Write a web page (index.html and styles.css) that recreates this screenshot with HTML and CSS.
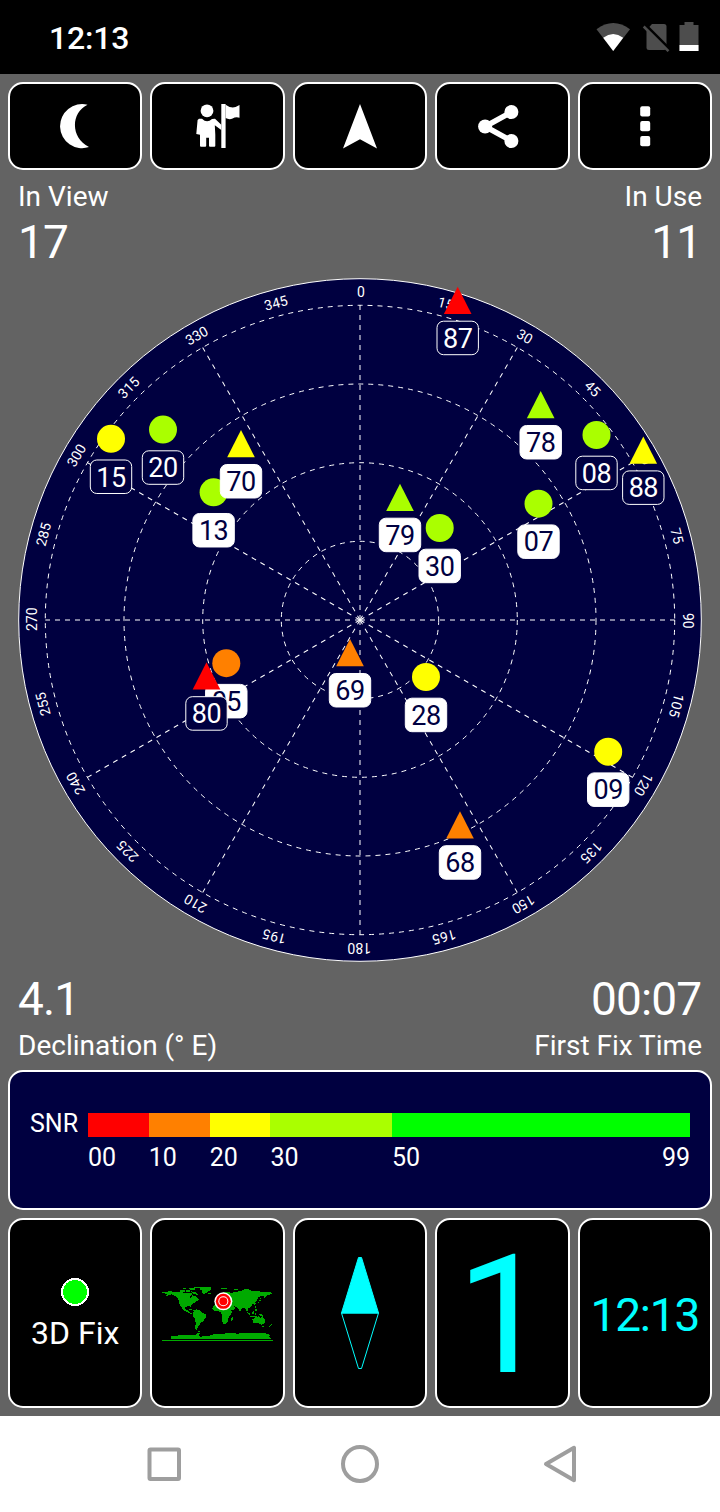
FILE: index.html
```html
<!DOCTYPE html>
<html lang="en">
<head>
    <meta charset="UTF-8">
    <title>GPS Status</title>
    <link rel="stylesheet" href="styles.css">
</head>
<body>
    <div class="status-bar">
        <span class="clock">12:13</span>
        <svg class="status-icons" width="104" height="32" viewBox="0 0 104 32">
            <!-- wifi -->
            <path class="dim" d="M17.2 31 L0.5 9.3 Q17.2 -3.2 34 9.3 Z"/>
            <path class="lit" d="M17.2 31 L7.2 17.7 Q17.2 10.3 27.2 17.7 Z"/>
            <!-- no sim -->
            <path class="dim" d="M56 4 H68 Q70.5 4 70.5 6.500 V27.500 Q70.500 30 68 30 H53 Q50.500 30 50.500 27.500 V10 Z"/>
            <path class="slash-gap" d="M48 3.500 L74 29.500"/>
            <path class="slash" d="M47.700 6.500 L72.500 31.200"/>
            <!-- battery -->
            <path class="dim" d="M88.500 2 H97.500 V5 H102.500 V31 H83.500 V5 H88.500 Z"/>
            <path class="lit" d="M83.500 25 H102.500 V31 H83.500 Z"/>
        </svg>
    </div>

    <div class="toolbar">
        <button class="tile">
            <svg width="48" height="48" viewBox="-0.7 0 48 48"><path d="M35.800 2.800 A22 22 0 1 0 37.300 45 C18.800 36 18.800 11 35.800 2.800 Z"/></svg>
        </button>
        <button class="tile">
            <svg width="48" height="48" viewBox="0.4 0 48 48">
                <circle cx="13.400" cy="8.800" r="6.400"/>
                <path d="M5.400 16.700 H8.400 Q11 19.300 13.500 19.300 Q16 19.300 18.400 17 L21.400 16.700 L27.700 22.700 V28 L21.200 23.300 L21.700 32.700 V43.700 Q21.700 44.700 20.700 44.700 H16.400 Q15.400 44.700 15.400 43.700 V35.700 H12.600 V43.700 Q12.600 44.700 11.600 44.700 H7.400 Q6.400 44.700 6.400 43.700 V32.700 L2.700 32 L4 18 Z"/>
                <path d="M27.700 2 H32 V46 H27.700 Z"/>
                <path d="M32 2.700 Q37 6.500 42 5 L45.900 3 V15.700 Q42 14.700 39 16.500 Q35.500 18 32 16 Z"/>
            </svg>
        </button>
        <button class="tile">
            <svg width="48" height="48" viewBox="0 0 48 48"><path d="M24 2 L41 46.500 L24 37.200 L7 46.500 Z"/></svg>
        </button>
        <button class="tile">
            <svg width="48" height="48" viewBox="-0.5 0 48 48">
                <circle cx="6.600" cy="24.500" r="7"/>
                <circle cx="32.900" cy="10" r="7"/>
                <circle cx="32.900" cy="39" r="7"/>
                <path class="link" d="M32.900 10 L6.600 24.500 L32.900 39"/>
            </svg>
        </button>
        <button class="tile">
            <svg width="48" height="48" viewBox="0 0 48 48">
                <rect x="19.200" y="4.300" width="10" height="10.200" rx="2"/>
                <rect x="19.200" y="19" width="10" height="10.200" rx="2"/>
                <rect x="19.200" y="34" width="10" height="10.200" rx="2"/>
            </svg>
        </button>
    </div>

    <div class="info info-top">
        <div>
            <div class="label">In View</div>
            <div class="value">17</div>
        </div>
        <div class="right">
            <div class="label">In Use</div>
            <div class="value">11</div>
        </div>
    </div>

    <svg class="sky" id="sky" width="720" height="702" viewBox="-360 -351 720 702">
        <circle class="horizon" r="341.300"/>
    </svg>

    <div class="info info-bottom">
        <div>
            <div class="value">4.1</div>
            <div class="label">Declination (° E)</div>
        </div>
        <div class="right">
            <div class="value">00:07</div>
            <div class="label">First Fix Time</div>
        </div>
    </div>

    <div class="snr">
        <div class="snr-name">SNR</div>
        <div class="scale">
            <div class="step w10 red"></div>
            <div class="step w10 orange"></div>
            <div class="step w10 yellow"></div>
            <div class="step w20 lime"></div>
            <div class="step w49 green"></div>
        </div>
        <div class="numbers">
            <div class="step w10">00</div>
            <div class="step w10">10</div>
            <div class="step w10">20</div>
            <div class="step w20">30</div>
            <div class="step w49 ends"><span>50</span><span>99</span></div>
        </div>
    </div>

    <div class="pages">
        <div class="tile fix">
            <svg width="28" height="28" viewBox="0 0 28 28" shape-rendering="crispEdges"><circle class="fix-dot" cx="14" cy="14" r="13"/></svg>
            <span>3D Fix</span>
        </div>
        <div class="tile">
            <svg class="world" width="111" height="55" viewBox="21 18 333 165">
                <g class="land" shape-rendering="crispEdges">
                    <path d="M21 37 H35 L40 33 L48 34 L60 37 L78 36 L90 40 L104 38 L113 42 L104 50 L108 55 L112 46 L122 48 L128 54 L133 59 L124 64 L114 71 L107 76 L109 84 L103 79 L92 80 L90 87 L96 91 L100 88 L101 95 L108 99 L112 103 L100 98 L86 92 L80 82 L73 72 L70 58 L62 48 L50 43 L42 46 L32 49 L37 42 L21 39 Z"/>
                    <path d="M75 30 H90 V35 H75 Z M94 30 H104 V36 H94 Z M101 24 H120 V29 H106 Z M108 34 L124 37 L128 44 L118 43 Z M120 21 H138 V25 H116 Z M84 25 H92 V28 H84 Z"/>
                    <path d="M132 27 L140 22 L152 20 L169 22 L168 30 L158 36 L148 42 L143 39 L140 31 Z M158 38 H169 V42 H160 Z"/>
                    <path d="M102 87 H112 V90 H104 Z M114 90 H118 V92 H114 Z M117 91 L124 88 L134 91 L140 98 L155 104 L151 114 L146 122 L138 128 L132 136 L128 142 L126 150 L120 146 L122 130 L121 118 L114 108 L115 98 Z M128 154 H135 V157 H128 Z"/>
                    <path d="M175 78 L182 71 L200 70 L215 74 L222 82 L227 91 L233 93 L227 104 L221 112 L218 124 L213 131 L204 132 L200 118 L201 106 L198 96 L190 94 L178 94 L172 86 Z M228 116 L234 110 L232 122 L228 125 Z"/>
                    <path d="M180 68 L180 60 L188 52 L196 44 L205 37 L218 36 L232 39 L240 35 L258 34 L270 27 L285 29 L290 34 L310 34 L330 36 L354 38 L350 42 L336 46 L328 53 L325 47 L316 48 L308 54 L306 62 L298 67 L304 73 L298 74 L290 70 L291 78 L284 84 L277 86 L281 93 L274 92 L270 85 L264 83 L258 90 L256 96 L250 86 L244 80 L236 79 L242 84 L234 91 L226 91 L218 78 L212 74 L204 68 L190 68 Z"/>
                    <path d="M198 24 H215 V27 H198 Z M236 28 H250 V31 H240 Z M312 60 H318 V64 H312 Z M308 66 H313 V70 H308 Z M316 53 H319 V58 H316 Z M301 79 H304 V83 H301 Z M300 88 H306 V94 H300 Z"/>
                    <path d="M276 95 L284 100 L286 106 L279 101 Z M289 98 L296 93 L298 101 L291 104 Z M300 98 H304 V106 H300 Z M286 107 H305 V110 H286 Z M308 100 L322 103 L327 109 L316 108 Z"/>
                    <path d="M292 118 L302 111 L312 109 L318 114 L322 107 L330 121 L328 131 L318 134 L308 128 L294 130 Z M322 137 H326 V140 H322 Z M343 138 L348 135 L352 131 L350 136 L344 141 Z"/>
                    <path d="M47 175 L50 167 L90 166 L112 165 L122 164 L128 158 L138 158 L130 164 L134 170 L160 168 L176 163 L204 161 L236 158 L246 162 L262 158 H322 L338 162 L346 165 L342 171 L350 178 H56 Z M21 180 H354 V183 H21 Z"/>
                </g>
                <circle class="white" cx="205" cy="64" r="27"/>
                <circle class="mark" cx="205" cy="64" r="22.500"/>
                <circle class="white" cx="205" cy="64" r="15"/>
                <circle class="mark" cx="205" cy="64" r="12"/>
            </svg>
        </div>
        <div class="tile">
            <svg class="needle" width="40" height="114" viewBox="0 0 40 114">
                <path class="north" d="M18.500 1.500 H21.500 L38.500 57 H1.500 Z"/>
                <path d="M1.500 57 H38.500 L21.500 112.500 H18.500 Z"/>
            </svg>
        </div>
        <div class="tile cyan big">1</div>
        <div class="tile cyan">12:13</div>
    </div>

    <div class="nav-bar">
        <svg width="40" height="40" viewBox="0 0 40 40"><rect x="5.500" y="5.500" width="29.500" height="29.500" rx="1"/></svg>
        <svg width="40" height="40" viewBox="0 0 40 40"><circle cx="20" cy="20" r="17"/></svg>
        <svg width="40" height="40" viewBox="0 0 40 40"><path d="M34 3.800 V36.200 L6 20 Z"/></svg>
    </div>

    <script src="sky.js"></script>
</body>
</html>
```

FILE: styles.css
```css
body {
    margin: 0;
    background-color: #636363;
    color: #fff;
    font-family: Roboto, sans-serif;
}

svg {
    display: block;
}

.status-bar {
    display: flex;
    justify-content: space-between;
    align-items: flex-start;
    box-sizing: border-box;
    height: 74px;
    padding: 20px 20.500px 0 49px;
    background-color: #000;
}

.clock {
    font-size: 32px;
    font-weight: 500;
    line-height: 36px;
    letter-spacing: -0.200px;
}

.dim {
    fill: #4d4d4d;
}

.lit {
    fill: #fff;
}

.slash {
    stroke: #4d4d4d;
    stroke-width: 2.500;
}

.slash-gap {
    stroke: #000;
    stroke-width: 3;
}

.toolbar, .pages {
    display: grid;
    grid-template-columns: repeat(5, 1fr);
    gap: 8px;
    padding: 8px 8px 0;
}

.tile {
    display: flex;
    flex-direction: column;
    align-items: center;
    justify-content: center;
    box-sizing: border-box;
    padding: 0;
    border: 2px solid #fff;
    border-radius: 15px;
    background-color: #000;
    color: #fff;
    font-family: inherit;
}

.toolbar .tile {
    height: 88px;
}

.toolbar svg {
    fill: #fff;
}

.toolbar .link {
    fill: none;
    stroke: #fff;
    stroke-width: 5.500;
}

.info {
    display: flex;
    justify-content: space-between;
    box-sizing: border-box;
    padding: 0 18px;
}

.info-top {
    height: 99px;
    padding-top: 9px;
}

.info-bottom {
    height: 98.500px;
    padding-top: 1px;
}

.info-bottom .label {
    margin-top: 2px;
}

.right {
    text-align: right;
}

.label {
    font-size: 28px;
    line-height: 36px;
}

.value {
    font-size: 46px;
    line-height: 54px;
    letter-spacing: -0.900px;
}

.right .value {
    margin-right: 0.900px;
}

/* sky view */
.horizon {
    fill: #000040;
    stroke: #fff;
}

.grid {
    fill: none;
    stroke: #fff;
    stroke-dasharray: 5 5;
}

.degree {
    fill: #fff;
    font-size: 14px;
    text-anchor: middle;
}

.prn rect {
    fill: #000040;
    stroke: #fff;
}

.prn text {
    fill: #fff;
    font-size: 27px;
    letter-spacing: -0.500px;
    text-anchor: middle;
}

.prn.used rect {
    fill: #fff;
}

.prn.used text {
    fill: #000040;
}

/* signal scale */
.snr {
    display: grid;
    grid-template-columns: 58px 1fr;
    grid-template-rows: 24.500px 30px;
    row-gap: 6px;
    box-sizing: border-box;
    height: 140.500px;
    margin: 0 8px;
    padding: 41px 20px 0;
    border: 2px solid #fff;
    border-radius: 15px;
    background-color: #000040;
    font-size: 25px;
    line-height: 30px;
}

.snr-name {
    margin-top: -4px;
}

.scale, .numbers {
    display: flex;
    grid-column: 2;
}

.step {
    flex-basis: 0;
}

.w10 { flex-grow: 10; }
.w20 { flex-grow: 20; }
.w49 { flex-grow: 49; }

.red { background-color: #ff0000; }
.orange { background-color: #ff8000; }
.yellow { background-color: #ffff00; }
.lime { background-color: #aaff00; }
.green { background-color: #00ff00; }

.ends {
    display: flex;
    justify-content: space-between;
}

/* page switcher */
.pages .tile {
    height: 190px;
}

.pages .fix {
    gap: 8px;
    padding-top: 4px;
    font-size: 32px;
    line-height: 38px;
}

.fix-dot {
    fill: #00ff00;
    stroke: #fff;
    stroke-width: 2;
}

.land {
    fill: #00aa00;
}

.white {
    fill: #fff;
}

.mark {
    fill: #ff0000;
}

.needle {
    fill: none;
    stroke: #00ffff;
}

.north {
    fill: #00ffff;
}

.pages .cyan {
    padding-top: 3px;
    color: #00ffff;
    font-size: 46px;
    line-height: 54px;
    letter-spacing: -1.200px;
}

.pages .big {
    padding-top: 5px;
    font-size: 165px;
    line-height: 188px;
}

.nav-bar {
    display: flex;
    justify-content: center;
    align-items: center;
    gap: 160px;
    height: 96px;
    margin-top: 8px;
    background-color: #fff;
}

.nav-bar svg {
    fill: none;
    stroke: #9e9e9e;
    stroke-width: 4;
    stroke-linejoin: round;
}

.nav-bar svg:first-child {
    margin: 0 -4px 0 4px;
}
```

FILE: sky.js
```js
const sky = document.getElementById("sky");

function add(parent, name, attrs, text) {
    const el = document.createElementNS("http://www.w3.org/2000/svg", name);
    for (const key in attrs) el.setAttribute(key, attrs[key]);
    if (text) el.textContent = text;
    parent.appendChild(el);
    return el;
}

// elevation rings
[78.7, 157.3, 236, 314.7].forEach(r => add(sky, "circle", { class: "grid", r: r }));

// azimuth lines and degree labels
for (let deg = 0; deg < 360; deg += 15) {
    if (deg % 30 === 0) {
        add(sky, "path", { class: "grid", d: "M0 0 V-314.7", transform: "rotate(" + deg + ")" });
    }
    add(sky, "text", { class: "degree", x: 0.8, y: -323, transform: "rotate(" + deg + ")" }, String(deg));
}

const colors = { red: "#ff0000", orange: "#ff8000", yellow: "#ffff00", lime: "#aaff00" };

// prn, x, y, color, used in fix
const satellites = [
    ["05", -133.7, 43.2, "orange", true],
    ["07", 178.5, -116.3, "lime", true],
    ["08", 236.5, -185, "lime", false],
    ["09", 248.2, 131.7, "yellow", true],
    ["13", -146.4, -127.7, "lime", true],
    ["15", -249, -181.2, "yellow", false],
    ["20", -197, -190.4, "lime", false],
    ["28", 66, 57, "yellow", true],
    ["30", 79.7, -92, "lime", true],
    ["68", 100, 204.5, "orange", true],
    ["69", -10, 32.3, "orange", true],
    ["70", -119, -176.7, "yellow", true],
    ["78", 180.7, -215.7, "lime", true],
    ["79", 40, -123, "lime", true],
    ["80", -153.5, 55.5, "red", false],
    ["87", 97.7, -320, "red", false],
    ["88", 283.3, -170.3, "yellow", false]
];

satellites.forEach(([prn, x, y, color, used]) => {
    const g = add(sky, "g", { class: used ? "prn used" : "prn", transform: "translate(" + x + " " + y + ")" });
    // GLONASS satellites start at 65 and are drawn as triangles
    if (Number(prn) >= 65) {
        add(g, "path", { d: "M0 -13.3 L13.8 14 H-13.8 Z", fill: colors[color] });
    } else {
        add(g, "circle", { r: 14, fill: colors[color] });
    }
    add(g, "rect", { x: -20.7, y: 21.2, width: 41.4, height: 33.5, rx: 6.5 });
    add(g, "text", { y: 47.8 }, prn);
});
```
